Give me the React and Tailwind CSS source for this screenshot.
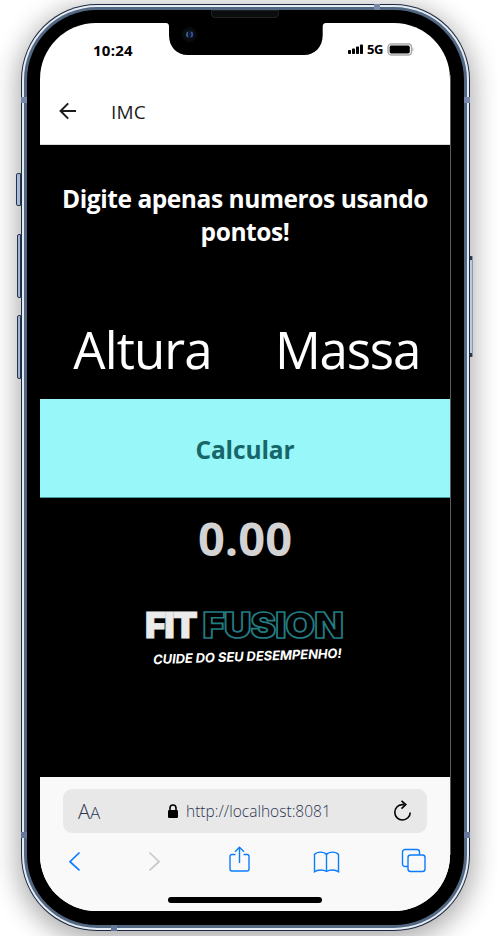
const ui = "font-['Open_Sans','Noto_Sans',sans-serif]";

function StatusIcons() {
  return (
    <div className="mb-[4px] flex items-center">
      <svg width="15" height="10" viewBox="0 0 15 10" fill="#000">
        <rect x="0" y="6" width="3" height="4" rx="0.8" />
        <rect x="4" y="4.6" width="3" height="5.4" rx="0.8" />
        <rect x="8" y="2.6" width="3" height="7.4" rx="0.8" />
        <rect x="12" y="0.4" width="3" height="9.6" rx="0.8" />
      </svg>
      <span className="ml-[4px] w-[17px] text-[13px] leading-4 font-bold tracking-[-0.4px]">5G</span>
      <svg className="ml-[3px]" width="28" height="13" viewBox="0 0 28 13">
        <rect x="1" y="1" width="23.5" height="11" rx="3.2" fill="#fff" stroke="#a9a9a9" strokeWidth="1.4" />
        <rect x="2.6" y="2.6" width="20.2" height="7.8" rx="1.6" fill="#000" />
        <path d="M25.5 4.2q2 2.3 0 4.6z" fill="#a9a9a9" />
      </svg>
    </div>
  );
}

function Notch() {
  return (
    <svg className="absolute top-[-1px] left-[125px]" width="162" height="33" viewBox="0 0 162 33">
      <path d="M1 0H161V1Q157.700 1 157.700 4.500V13C157.700 25 150 33 139 33H23C11.500 33 4 25 4 13V4.500Q4 1 1 1Z" fill="#000" />
      <circle cx="24.5" cy="12.5" r="7.5" fill="#0a0b0d" />
      <circle cx="24.5" cy="12.5" r="4" fill="#111a2b" />
      <path d="M22.600 10q-1.5 2.5 0 5" stroke="#3f7488" strokeWidth="1.3" fill="none" />
      <path d="M26.3 10q1.8 2.5 0 5" stroke="#3a4fc4" strokeWidth="1.7" fill="none" />
    </svg>
  );
}

function Header() {
  return (
    <header className="flex h-[66px] items-center border-b border-[#dcdcdc] pl-[19px] text-[#1c1c1e]">
      <svg className="mb-px" width="18" height="18" viewBox="0 0 18 18" fill="none" stroke="#1c1c1e" strokeWidth="2">
        <path d="M17 9H2M9.2 1.4L1.6 9l7.6 7.6" />
      </svg>
      <span className="ml-[34px] text-[19px] leading-6 font-medium tracking-[0.200px]">IMC</span>
    </header>
  );
}

function Logo() {
  return (
    <div className="flex w-[200px] flex-col items-center font-['Inter',sans-serif]">
      <div className="flex h-[34px] w-[198px] items-center justify-between self-start text-[36px] leading-[34px] font-black">
        <span className="origin-left tracking-[-1.700px] text-[#ebebeb] [-webkit-text-stroke:0.9px_#ebebeb]">FIT</span>
        <span className="origin-right scale-x-[1.065] tracking-[-0.9px] text-black [-webkit-text-stroke:1.7px_#237c82]">FUSION</span>
      </div>
      <p className="mt-[6px] ml-[4px] -rotate-[1.9deg] text-[13px] leading-[16px] font-bold tracking-[-0.1px] whitespace-nowrap text-white italic">
        CUIDE DO SEU DESEMPENHO!
      </p>
    </div>
  );
}

function BrowserBar() {
  return (
    <footer className="h-[134px] bg-[#f9f9f9] px-[23px] pt-[12px]">
      <div className="flex h-[44px] items-center rounded-[9px] bg-[#e8e8e8] pr-[15px] pl-[15px] text-[#2b3650]">
        <span className="w-[26px] pt-[3px] text-[20px] leading-6 font-light">
          A<span className="text-[17px]">A</span>
        </span>
        <svg className="ml-[64px]" width="10" height="14" viewBox="0 0 10 14">
          <rect x="0" y="6" width="10" height="8" rx="1.2" fill="#000" />
          <path d="M2 6.5V4a3 3 0 0 1 6 0v2.5" fill="none" stroke="#000" strokeWidth="1.6" />
        </svg>
        <span className="ml-[8px] text-[15.500px] leading-5 font-light tracking-[0.020px]">http://localhost:8081</span>
        <svg className="ml-auto" width="19" height="22" viewBox="0 0 19 22" fill="none" stroke="#000" strokeWidth="1.6">
          <path d="M11 4.6H9.2A7.7 7.7 0 1 0 17.2 12.4" />
          <path d="M8.5 0.8l4.3 3.8-4.3 4" />
        </svg>
      </div>
      <nav className="flex h-[56px] items-center justify-between pr-px pl-[5px] text-[#0a7cff]">
        <svg width="13" height="20" viewBox="0 0 13 20" fill="none" stroke="currentColor" strokeWidth="1.7">
          <path d="M11.5 1.5L2 10.7l9.5 8.6" />
        </svg>
        <svg className="ml-[6px] text-[#c8c8ca]" width="13" height="20" viewBox="0 0 13 20" fill="none" stroke="currentColor" strokeWidth="1.7">
          <path d="M1.5 1.5L11 10.7l-9.5 8.6" />
        </svg>
        <svg className="mb-[4px] ml-[6px]" width="21" height="26" viewBox="0 0 21 26" fill="none" stroke="currentColor" strokeWidth="1.4">
          <path d="M6.500 8.500H3a2 2 0 0 0-2 2V23a2 2 0 0 0 2 2h15a2 2 0 0 0 2-2V10.500a2 2 0 0 0-2-2h-3.500M10.500 17V1.500M6 5.700L10.500 1.200 15 5.700" />
        </svg>
        <svg className="mt-[2px] ml-[2px]" width="27" height="22" viewBox="0 0 27 22" fill="none" stroke="currentColor" strokeWidth="1.4">
          <path d="M13.500 3.500V20.500M13.500 3.500C11 .3 4 .3 1.500 3.500V20.800C4.500 18.500 10.500 18.500 13.500 20.500C16.500 18.500 22.500 18.500 25.500 20.800V3.500C23 .3 16 .3 13.500 3.500Z" />
        </svg>
        <svg className="mb-px" width="25" height="25" viewBox="0 0 25 25" fill="none" stroke="currentColor" strokeWidth="1.4">
          <rect x="7" y="7" width="17" height="16.500" rx="2.500" />
          <path d="M7 18.500H4A2.500 2.500 0 0 1 1.500 16V4a2.500 2.500 0 0 1 2.500-2.500h12A2.500 2.500 0 0 1 18.500 4v3" />
        </svg>
      </nav>
      <div className="mx-auto mt-[8px] h-[6px] w-[154px] rounded-full bg-black" />
    </footer>
  );
}

export default function App() {
  return (
    <div className={`${ui} h-[936px] w-[497px] overflow-hidden bg-white pt-[4px] pl-[21px]`}>
      <div className="relative h-[927px] w-[449px] rounded-[76px] bg-[#1d2940] p-px shadow-[0_6px_26px_4px_rgba(0,0,0,0.32)]">
        <div className="absolute top-[169px] left-[-5px] h-[33px] w-[5px] rounded-l-[2px] border border-[#26354f] bg-[#a9bbd6]" />
        <div className="absolute top-[230px] left-[-4px] h-[64px] w-[4px] rounded-l-[2px] border border-[#26354f] bg-[#a3b5cd]" />
        <div className="absolute top-[311px] left-[-4px] h-[64px] w-[4px] rounded-l-[2px] border border-[#26354f] bg-[#a3b5cd]" />
        <div className="absolute top-[252px] left-[449px] h-[101px] w-[3px] rounded-r-[2px] border-y-4 border-r border-y-[#26354f] border-r-[#8b97aa] bg-[#b9c9e0]" />
        <div className="h-full rounded-[75px] bg-[#e6ecf4] p-[2px]">
          <div className="h-full rounded-[73px] bg-[#526882] p-[3px]">
            <div className="h-full rounded-[70px] bg-black px-[13px] pt-[13px]">
              <div className="relative h-[888px] w-[411px]">
                <main className="flex h-[888px] w-[410px] flex-col overflow-hidden rounded-[56px] bg-white">
                  <div className="flex h-[56px] items-center justify-between pr-[35px] pl-[53px]">
                    <span className="mb-[2px] text-[15px] leading-5 font-bold tracking-[0.250px]">10:24</span>
                    <StatusIcons />
                  </div>
                  <Header />
                  <section className="flex h-[632px] flex-col items-center bg-black text-white">
                    <h1 className="mt-[37px] w-[400px] text-center text-[24.500px] leading-[33px] font-bold tracking-[-0.430px]">
                      Digite apenas numeros usando pontos!
                    </h1>
                    <div className="mt-[52px] grid h-[98px] w-full grid-cols-2 items-center text-center text-[51px] leading-[98px]">
                      <span className="tracking-[-0.900px]">Altura</span>
                      <span className="tracking-[-1.200px]">Massa</span>
                    </div>
                    <button className="mt-[1px] h-[99px] w-full border-b border-[#4b9d9f] bg-[#98f7f9] pt-[4px] text-[24.500px] font-bold tracking-[-0.100px] text-[#17666a]">
                      Calcular
                    </button>
                    <output className="mt-[8px] text-[47px] leading-[64px] font-bold text-[#d3d3d3]">0.00</output>
                    <div className="mt-[38px]">
                      <Logo />
                    </div>
                  </section>
                  <BrowserBar />
                </main>
                <div className="absolute top-[52px] right-0 h-[780px] w-px bg-[#5a5a5a]" />
                <Notch />
              </div>
            </div>
          </div>
        </div>
        <div className="absolute top-[6px] left-[190px] h-[8px] w-[68px] rounded-b-[4px] border border-[#202224] bg-[#0b0c0d]" />
        <div className="absolute top-[93px] left-0 h-[6px] w-[6px] bg-[#7788a8]" />
        <div className="absolute top-[93px] right-0 h-[6px] w-[6px] bg-[#7788a8]" />
        <div className="absolute top-[828px] left-0 h-[6px] w-[6px] bg-[#66789b]" />
        <div className="absolute top-[828px] right-0 h-[6px] w-[6px] bg-[#66789b]" />
        <div className="absolute top-0 left-[353px] h-[6px] w-[6px] bg-[#7788a8]" />
        <div className="absolute bottom-0 left-[90px] h-[6px] w-[6px] bg-[#66789b]" />
      </div>
    </div>
  );
}
